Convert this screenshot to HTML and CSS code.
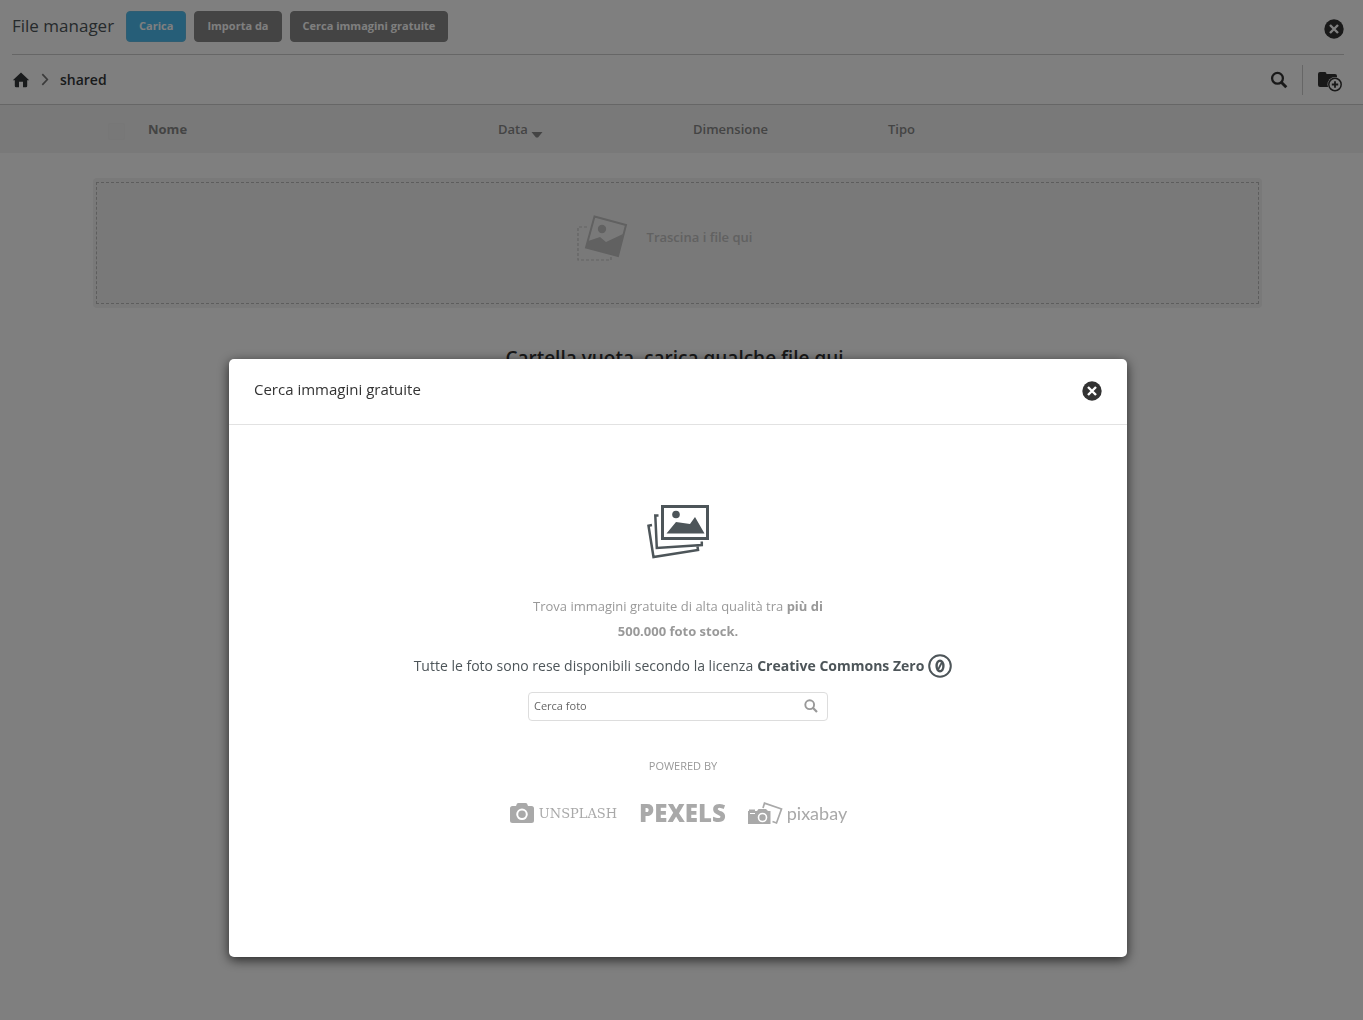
FILE: index.html
```html
<!DOCTYPE html>
<html lang="it">
<head>
<meta charset="utf-8">
<meta name="viewport" content="width=device-width, initial-scale=1">
<title>File manager</title>
<link rel="stylesheet" href="styles.css">
</head>
<body>
<div class="page">
  <header class="topbar">
    <h1 class="title">File manager</h1>
    <div class="actions">
      <button class="btn btn-primary" type="button">Carica</button>
      <button class="btn" type="button">Importa da</button>
      <button class="btn" type="button">Cerca immagini gratuite</button>
    </div>
    <button class="icon-btn close" type="button" aria-label="Chiudi">
      <svg width="20" height="20" viewBox="0 0 20 20"><circle cx="10" cy="10" r="9.7" fill="#333"/><path d="M6 6l8 8M14 6l-8 8" stroke="#fff" stroke-width="2.4"/></svg>
    </button>
  </header>

  <div class="pathbar">
    <nav class="crumbs" aria-label="Percorso">
      <a class="crumb-home" href="#" aria-label="Home">
        <svg width="18" height="16" viewBox="0 0 18 16"><path d="M9 .5L17.2 8.2h-2V14q0 1.300-1.300 1.300H11V9.800H7v5.500H4.100Q2.800 15.300 2.800 14V8.200H.8z" fill="#333739"/></svg>
      </a>
      <svg class="chevron" width="8" height="13" viewBox="0 0 8 13"><path d="M1.300 1.200l5 5.300-5 5.300" fill="none" stroke="#777" stroke-width="1.700"/></svg>
      <a class="crumb" href="#">shared</a>
    </nav>
    <div class="tools">
      <button class="icon-btn" type="button" aria-label="Cerca">
        <svg width="18" height="18" viewBox="0 0 18 18"><circle cx="7.500" cy="7.300" r="5.400" fill="none" stroke="#333" stroke-width="2.300"/><path d="M11.300 11.200l5 5" stroke="#333" stroke-width="2.900"/></svg>
      </button>
      <span class="divider"></span>
      <button class="icon-btn" type="button" aria-label="Nuova cartella">
        <svg width="26" height="25" viewBox="0 -4 26 25"><path d="M1 3Q1 1 3 1h5q1.500 0 1.500 2H18q2 0 2 2v11H3q-2 0-2-2z" fill="#333"/><circle cx="18" cy="13.500" r="7.500" fill="#fff"/><circle cx="18" cy="13.500" r="6.200" fill="#fff" stroke="#333" stroke-width="1.500"/><path d="M18 10.300v6.400M14.800 13.500h6.400" stroke="#333" stroke-width="1.800"/></svg>
      </button>
    </div>
  </div>

  <div class="list-head">
    <table class="list">
      <colgroup><col class="c-check"><col class="c-name"><col class="c-mid"><col class="c-mid"><col></colgroup>
      <thead>
        <tr>
          <th><input class="check" type="checkbox" aria-label="Seleziona tutto"></th>
          <th class="name">Nome</th>
          <th>Data <svg class="caret" width="12" height="6" viewBox="0 0 12 6"><path d="M.5 0h11L7 5.500H5z" fill="#888"/></svg></th>
          <th>Dimensione</th>
          <th>Tipo</th>
        </tr>
      </thead>
    </table>
  </div>

  <main class="content">
    <div class="dropzone">
      <div class="drop-inner">
        <svg width="51" height="47" viewBox="0 0 51 47">
          <path d="M10 12H1v33h33v-4" fill="none" stroke="#c6c6c6" stroke-width="1.200" stroke-dasharray="3 2"/>
          <path d="M17.500 1.500L49 10l-8 31L9 32.500z" fill="#f3f3f3" stroke="#c2c2c2" stroke-width="2"/>
          <circle cx="25" cy="14" r="4.200" fill="#c2c2c2"/>
          <path d="M11 26l12-4 6 5 17-8-5 22L9 32.500z" fill="#c2c2c2"/>
        </svg>
        <span>Trascina i file qui</span>
      </div>
    </div>
    <h2 class="empty">Cartella vuota, carica qualche file qui</h2>
  </main>
</div>

<div class="overlay">
  <section class="modal" role="dialog" aria-modal="true" aria-labelledby="modal-title">
    <header class="modal-head">
      <h2 class="modal-title" id="modal-title">Cerca immagini gratuite</h2>
      <button class="icon-btn" type="button" aria-label="Chiudi finestra">
        <svg width="20" height="20" viewBox="0 0 20 20"><circle cx="10" cy="10" r="9.700" fill="#333"/><path d="M6 6l8 8M14 6l-8 8" stroke="#fff" stroke-width="2.400"/></svg>
      </button>
    </header>
    <div class="modal-body">
      <svg class="photos" width="64" height="56" viewBox="0 0 64 56" fill="none" stroke="#4d5559">
        <path d="M16.500 2.500h45v32h-45z" stroke-width="3"/>
        <circle cx="30" cy="10.500" r="3.800" fill="#4d5559" stroke="none"/>
        <path d="M20.500 29.500L30 18l14 2 5-7 9.500 16.500z" fill="#4d5559" stroke="none"/>
        <path d="M12.500 11.500H9.300L10.800 44l45-3v-3.500" stroke-width="2.500"/>
        <path d="M6 21l-3.500.700 5 31.300 44.500-7-.500-3.500" stroke-width="2.500"/>
      </svg>
      <p class="lead">Trova immagini gratuite di alta qualità tra <strong>più di</strong><br><strong>500.000 foto stock.</strong></p>
      <p class="license">
        <span>Tutte le foto sono rese disponibili secondo la licenza</span>
        <strong>Creative Commons Zero</strong>
        <svg width="24" height="24" viewBox="0 0 24 24" fill="none" stroke="#4d5559"><circle cx="12" cy="12" r="10.800" stroke-width="2"/><ellipse cx="12" cy="12" rx="3.400" ry="5.300" stroke-width="2.400"/><path d="M14.300 7.500l-4.600 9" stroke-width="1.800"/></svg>
      </p>
      <form class="search">
        <input type="text" placeholder="Cerca foto" aria-label="Cerca foto">
        <button class="icon-btn" type="button" aria-label="Cerca">
          <svg width="14" height="14" viewBox="0 0 14 14"><circle cx="5.700" cy="5.700" r="4.400" fill="none" stroke="#999" stroke-width="1.900"/><path d="M8.800 8.800l4.200 4.200" stroke="#999" stroke-width="2.200"/></svg>
        </button>
      </form>
      <p class="powered">POWERED BY</p>
      <div class="brands">
        <span class="brand unsplash">
          <svg width="26" height="22" viewBox="0 0 26 22"><path d="M3.500 4H7l1-2.500Q8.500 1 9.500 1h7q1 0 1.500.500L19 4h3.500Q25 4 25 6.500v12q0 2.500-2.500 2.500h-19Q1 21 1 18.500v-12Q1 4 3.500 4z" fill="#a9a9a9"/><circle cx="13" cy="12.300" r="4.800" fill="none" stroke="#fff" stroke-width="2"/></svg>
          <span>UNSPLASH</span>
        </span>
        <span class="brand pexels">PEXELS</span>
        <span class="brand pixabay">
          <svg width="35" height="23" viewBox="0 0 35 23"><path d="M15 6l1.500-4.800L33.500 7l-5 14-4-1.500" fill="none" stroke="#a9a9a9" stroke-width="1.700"/><path d="M1 9V7.500h6V9h2l1.500-2H18l2 2h2.500v13H0V9z" fill="#a9a9a9"/><path d="M2 11.500h5" stroke="#fff"/><circle cx="14.500" cy="15.500" r="4" fill="none" stroke="#fff" stroke-width="1.600"/></svg>
          <span>pixabay</span>
        </span>
      </div>
    </div>
  </section>
</div>
</body>
</html>
```
FILE: styles.css
```css
* { box-sizing: border-box; }

body {
  margin: 0;
  min-height: 100vh;
  background: #fff;
  color: #4d5559;
  font-family: "Open Sans", "Noto Sans", sans-serif;
  font-size: 14px;
}

h1, h2, p { margin: 0; }

svg { display: block; }

a { color: inherit; text-decoration: none; }

button, input { font: inherit; }

.icon-btn {
  padding: 0;
  border: 0;
  background: none;
  cursor: pointer;
}

/* Top bar */
.topbar {
  display: flex;
  align-items: center;
  height: 55px;
  margin: 0 19px 0 12px;
  padding-bottom: 2px;
  border-bottom: 1px solid #ccc;
}

.title {
  font-size: 17px;
  font-weight: 400;
  line-height: 24px;
}

.actions {
  display: flex;
  gap: 8px;
  margin-left: 12px;
}

.btn {
  height: 31px;
  padding: 0 12px;
  border: 1px solid #888;
  border-radius: 4px;
  background: #888;
  color: #fff;
  font-size: 11px;
  font-weight: 700;
  line-height: 24px;
  cursor: pointer;
}

.btn-primary {
  border-color: #5ebbe4;
  background: #4dbdf0;
}

.close { margin: 6px 0 0 auto; }

/* Breadcrumb bar */
.pathbar {
  display: flex;
  align-items: center;
  justify-content: space-between;
  height: 50px;
  padding: 0 20px 0 12px;
  border-bottom: 1px solid #ccc;
}

.crumbs {
  display: flex;
  align-items: center;
  gap: 11px;
}

.crumb {
  color: #333739;
  font-size: 14px;
  font-weight: 600;
}

.tools {
  display: flex;
  align-items: center;
  gap: 14px;
}

.divider {
  width: 1px;
  height: 30px;
  background: #ccc;
}

/* Column headings */
.list-head {
  padding: 0 102px 0 95px;
  background: #f3f3f3;
}

.list {
  width: 100%;
  table-layout: fixed;
  border-collapse: collapse;
}

.c-check { width: 53px; }
.c-name { width: 350px; }
.c-mid { width: 195px; }

.list th {
  height: 48px;
  padding: 0;
  color: #888;
  font-size: 13px;
  font-weight: 600;
  text-align: left;
}

.list .name { font-weight: 700; }

.check {
  display: block;
  appearance: none;
  width: 17px;
  height: 17px;
  margin: 4px 0 0 13px;
  border: 1px solid #eee;
  border-radius: 2px;
  background: #f0f0f0;
}

.caret {
  display: inline-block;
  vertical-align: -4px;
}

/* Drop area */
.content { padding: 25px 101px 0 93px; }

.dropzone {
  padding: 4px 3px;
  border-radius: 4px;
  background: #f3f3f3;
}

.drop-inner {
  display: flex;
  justify-content: center;
  gap: 19px;
  height: 122px;
  padding: 32px 26px 0 0;
  border: 1px dashed #bbb;
  color: #c2c2c2;
  font-size: 13px;
  font-weight: 600;
  line-height: 44px;
}

.empty {
  margin-top: 37px;
  padding-right: 6px;
  color: #333;
  font-size: 19px;
  font-weight: 600;
  line-height: 26px;
  text-align: center;
}

/* Dialog */
.overlay {
  position: fixed;
  inset: 0;
  display: flex;
  justify-content: center;
  align-items: flex-start;
  padding: 359px 7px 0 0;
  overflow: auto;
  background: rgba(0, 0, 0, .5);
}

.modal {
  width: 898px;
  max-width: 100%;
  border-radius: 5px;
  background: #fff;
  box-shadow: 0 3px 12px rgba(0, 0, 0, .7);
}

.modal-head {
  display: flex;
  align-items: center;
  justify-content: space-between;
  height: 66px;
  padding: 0 25px 2px;
  border-bottom: 1px solid #e2e2e2;
}

.modal-title {
  padding-bottom: 4px;
  color: #333;
  font-size: 15px;
  font-weight: 400;
}

.modal-body {
  display: flex;
  flex-direction: column;
  align-items: center;
  padding: 79px 24px 132px;
}

.lead {
  margin-top: 34px;
  color: #999;
  font-size: 13px;
  font-weight: 500;
  line-height: 25px;
  text-align: center;
}

.license {
  display: flex;
  align-items: center;
  gap: 4px;
  margin-top: 10px;
  padding-left: 10px;
  font-size: 14px;
  line-height: 24px;
}

.search {
  display: flex;
  align-items: center;
  width: 300px;
  height: 29px;
  margin-top: 14px;
  padding: 0 9px 2px 5px;
  border: 1px solid #ddd;
  border-radius: 4px;
}

.search input {
  flex: 1;
  min-width: 0;
  padding: 0;
  border: 0;
  outline: 0;
  background: none;
  font-size: 11px;
  font-weight: 500;
}

.search input::placeholder { color: #666; }

.powered {
  margin-top: 35px;
  padding-left: 10px;
  color: #999;
  font-size: 11px;
  font-weight: 500;
  line-height: 20px;
}

.brands {
  display: flex;
  align-items: center;
  gap: 22px;
  height: 24px;
  margin-top: 25px;
  color: #a9a9a9;
}

.brand {
  display: flex;
  align-items: center;
  gap: 4px;
}

.unsplash {
  font-family: "DejaVu Serif", serif;
  font-size: 13px;
}

.pexels {
  font-size: 24px;
  font-weight: 800;
  line-height: 24px;
}

.pixabay {
  font-family: Lato, sans-serif;
  font-size: 18px;
  line-height: 20px;
}
```
